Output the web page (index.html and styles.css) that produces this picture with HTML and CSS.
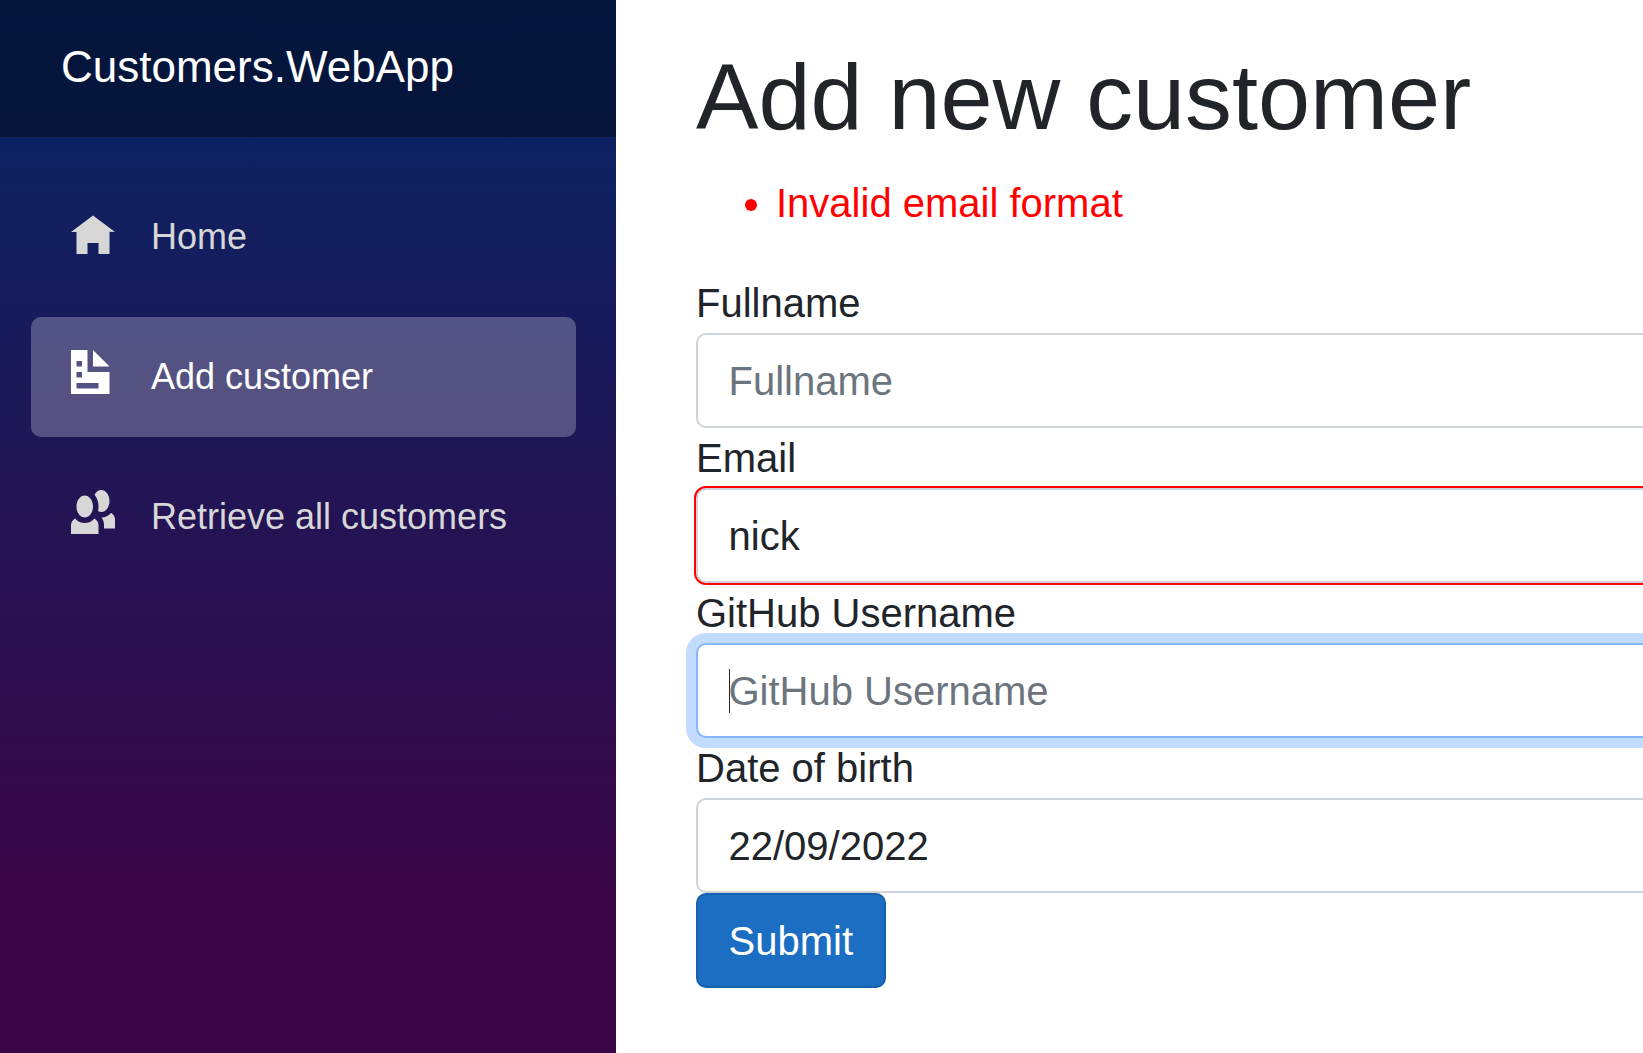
FILE: index.html
```html
<!DOCTYPE html>
<html lang="en">
<head>
<meta charset="utf-8">
<title>Customers.WebApp</title>
<link rel="stylesheet" href="styles.css">
</head>
<body>
<div class="page">
  <aside class="sidebar">
    <div class="brand-row"><a class="brand">Customers.WebApp</a></div>
    <nav class="nav">
      <a class="nav-link">
        <svg class="icon" viewBox="0 0 8 8"><path d="M4 1l-4 3h1v4h2v-2h2v2h2v-4.03l1 .03-4-3z"/></svg>
        <span>Home</span>
      </a>
      <a class="nav-link active">
        <svg class="icon" viewBox="0 0 8 8"><path d="M0 0v8h7v-4h-4v-4h-3zm4 0v3h3l-3-3zm-3 2h1v1h-1v-1zm0 2h1v1h-1v-1zm0 2h4v1h-4v-1z" fill-rule="evenodd"/></svg>
        <span>Add customer</span>
      </a>
      <a class="nav-link">
        <svg class="icon" viewBox="0 0 8 8"><path d="M5.5 0c-.51 0-.95.35-1.22.88.45.54.72 1.28.72 2.13 0 .29-.03.55-.09.81.19.11.38.19.59.19.83 0 1.5-.9 1.5-2s-.67-2-1.5-2zm-3 1c-.83 0-1.5.9-1.5 2s.67 2 1.5 2 1.5-.9 1.5-2-.67-2-1.5-2zm4.75 3.16c-.43.51-1.02.82-1.69.84.27.38.44.84.44 1.34v.66h2v-1.66c0-.52-.31-.97-.75-1.19zm-6.5 1c-.44.22-.75.67-.75 1.19v1.66h5v-1.66c0-.52-.31-.97-.75-1.19-.45.53-1.06.84-1.75.84s-1.3-.32-1.75-.84z"/></svg>
        <span>Retrieve all customers</span>
      </a>
    </nav>
  </aside>
  <main class="content">
    <h1 class="title">Add new customer</h1>
    <ul class="errors"><li>Invalid email format</li></ul>
    <form class="form">
      <label class="label" for="fullname">Fullname</label>
      <input class="control" id="fullname" placeholder="Fullname">
      <label class="label" for="email">Email</label>
      <input class="control invalid" id="email" value="nick">
      <label class="label" for="github">GitHub Username</label>
      <div class="field">
        <input class="control focused" id="github" placeholder="GitHub Username">
        <span class="caret"></span>
      </div>
      <label class="label" for="dob">Date of birth</label>
      <input class="control" id="dob" value="22/09/2022">
      <button class="submit" type="button">Submit</button>
    </form>
  </main>
</div>
</body>
</html>
```
FILE: styles.css
```css
* { box-sizing: border-box; }

body {
  margin: 0;
  overflow: hidden;
  background: #fff;
  color: #212529;
  font: 40px/60px "Liberation Sans", Arial, sans-serif;
}

.page { display: flex; height: 100vh; overflow: hidden; }

.sidebar {
  flex: 0 0 616px;
  background: linear-gradient(180deg, rgb(5, 39, 103) 0%, #3a0647 85%);
}

.brand-row {
  display: flex;
  align-items: center;
  height: 137px;
  padding: 0 61px 3px;
  background: rgba(0, 0, 0, .4);
}

.brand { color: #fff; font-size: 44px; }

.nav {
  display: flex;
  flex-direction: column;
  gap: 20px;
  padding: 40px 40px 0 31px;
}

.nav-link {
  display: flex;
  align-items: center;
  gap: 36px;
  height: 120px;
  padding: 0 40px;
  border-radius: 10px;
  color: #d7d7d7;
  font-size: 36px;
  white-space: nowrap;
}

.nav-link.active { background: rgba(255, 255, 255, .25); color: #fff; }

.icon {
  flex: none;
  width: 44px;
  height: 44px;
  margin-bottom: 10px;
  fill: currentColor;
}

.content { flex: 0 0 1400px; padding: 41px 80px 0; }

.title {
  margin: 0 0 20px;
  font-size: 93.6px;
  font-weight: 400;
  line-height: 112px;
}

.errors { margin: 0 0 40px; padding-left: 80px; color: red; }

.form { display: flex; flex-direction: column; align-items: stretch; }

.label { display: block; }

.field { position: relative; display: flex; }

.control {
  width: 100%;
  height: 95px;
  padding: 16px 30.5px 15px;
  border: 2px solid #ced4da;
  border-radius: 10px;
  outline: none;
  background: #fff;
  color: #212529;
  font: inherit;
}

.control::placeholder { color: #6c757d; opacity: 1; }

.control.invalid { outline: 2px solid red; }

.control.focused {
  border-color: #86b7fe;
  box-shadow: 0 0 0 10px rgba(13, 110, 253, .25);
}

.caret {
  position: absolute;
  left: 33px;
  top: 26px;
  width: 1px;
  height: 44px;
  background: #212529;
}

.submit {
  align-self: flex-start;
  height: 95px;
  padding: 0 30.5px;
  border: 2px solid #1861ac;
  border-radius: 10px;
  background: #1b6ec2;
  color: #fff;
  font: inherit;
}
```
